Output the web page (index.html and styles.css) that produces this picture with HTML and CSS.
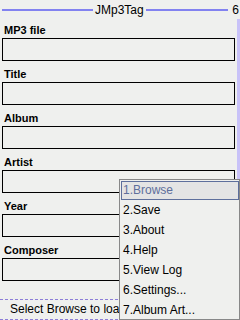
FILE: index.html
```html
<!DOCTYPE html>
<html>
<head>
<meta charset="utf-8">
<link rel="stylesheet" href="styles.css">
</head>
<body>
<div class="screen">
  <div class="header">
    <div class="hline hline-l"></div>
    <div class="htitle">JMp3Tag</div>
    <div class="hline hline-r"></div>
    <div class="hnum">6</div>
  </div>
  <div class="main">
    <div class="fields">
      <div class="field"><div class="label">MP3 file</div><div class="box"></div></div>
      <div class="field"><div class="label">Title</div><div class="box"></div></div>
      <div class="field"><div class="label">Album</div><div class="box"></div></div>
      <div class="field"><div class="label">Artist</div><div class="box"></div></div>
      <div class="field"><div class="label">Year</div><div class="box"></div></div>
      <div class="field"><div class="label">Composer</div><div class="box"></div></div>
    </div>
    <div class="scroll"></div>
  </div>
  <div class="status"><span class="status-text">Select Browse to load a file</span></div>
  <div class="menu">
    <div class="item selected">1.Browse</div>
    <div class="item">2.Save</div>
    <div class="item">3.About</div>
    <div class="item">4.Help</div>
    <div class="item">5.View Log</div>
    <div class="item">6.Settings...</div>
    <div class="item">7.Album Art...</div>
  </div>
</div>
</body>
</html>
```
FILE: styles.css
```css
html, body {
  margin: 0;
  padding: 0;
  background: #eff0ee;
}
.screen {
  position: relative;
  width: 240px;
  height: 320px;
  overflow: hidden;
  background: #eff0ee;
  font-family: "Liberation Sans", Arial, sans-serif;
  color: #000;
}
.header {
  display: flex;
  align-items: center;
  padding-top: 3px;
  height: 14px;
  font-size: 12px;
  line-height: 14px;
}
.hline {
  height: 2px;
  background: #8282f0;
}
.hline-l {
  width: 91px;
  margin-left: 2px;
}
.htitle {
  margin: 0 2px;
  white-space: nowrap;
}
.hline-r {
  flex: 1;
}
.hnum {
  margin-left: 4px;
  margin-right: 1px;
}
.main {
  display: flex;
  height: 282px;
}
.fields {
  width: 237px;
  padding-left: 2px;
  box-sizing: border-box;
}
.label {
  padding-top: 7px;
  padding-left: 2px;
  margin-bottom: 1px;
  font-size: 11px;
  font-weight: bold;
  line-height: 13px;
  height: 13px;
}
.box {
  width: 233px;
  height: 23px;
  box-sizing: border-box;
  border: 1px solid #000;
}
.scroll {
  width: 3px;
  margin-top: 2px;
  height: 280px;
  background: #c8c2f8;
}
.status {
  height: 21px;
  box-sizing: border-box;
  padding: 1px 0 0 10px;
  font-size: 12px;
  line-height: 19px;
  white-space: nowrap;
  overflow: hidden;
  background:
    repeating-linear-gradient(to right, #8c7ed8 0 3px, transparent 3px 5px) top left / 100% 1px no-repeat,
    repeating-linear-gradient(to right, #8c7ed8 0 3px, transparent 3px 5px) bottom left / 100% 1px no-repeat;
}
.status-text {
  display: block;
  width: 109px;
  overflow: hidden;
  white-space: nowrap;
}
.menu {
  position: absolute;
  left: 119px;
  top: 179px;
  width: 121px;
  height: 141px;
  box-sizing: border-box;
  border: 1px solid #888;
  background: #eff0ee;
  font-size: 12px;
}
.item {
  height: 20px;
  line-height: 20px;
  padding-left: 3px;
  white-space: nowrap;
}
.item.selected {
  margin: 1px 0 0 1px;
  height: 19px;
  line-height: 17px;
  padding-left: 1px;
  box-sizing: border-box;
  border: 1px solid #5e6f9c;
  background: #e4e4e4;
  color: #5e6f9c;
}
```
